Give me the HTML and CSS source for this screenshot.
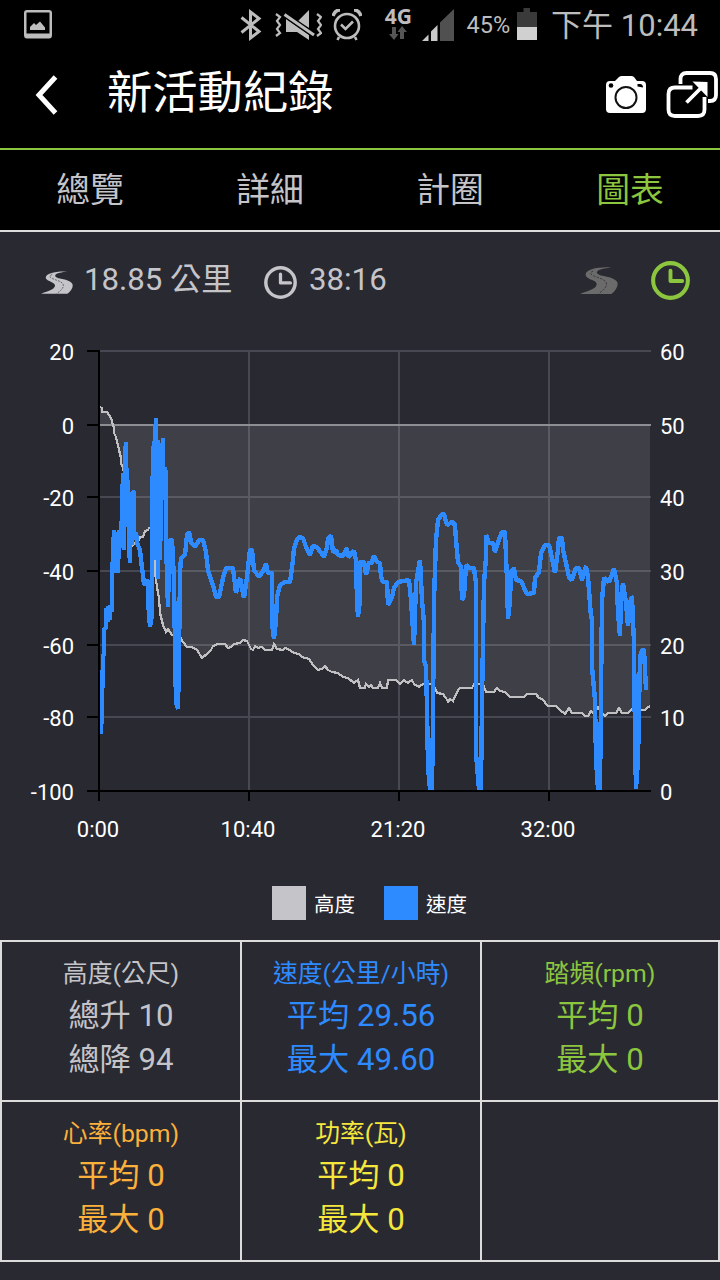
FILE: index.html
```
<!DOCTYPE html>
<html lang="zh-Hant">
<head>
    <meta charset="UTF-8">
    <meta name="viewport" content="width=device-width, initial-scale=1.0">
    <title>新活動紀錄</title>
    <link rel="stylesheet" href="styles.css">
</head>
<body>
    <svg class="defs" width="0" height="0">
        <symbol id="road" viewBox="0 0 115 81">
            <path fill="currentColor" d="M95 1C50-1 18 8 17 22C17 31 28 35 42 41C56 49 50 58 42 64C32 71 14 75 0 81H95C108 71 114 60 114 50C113 38 96 32 72 27C56 24 48 19 52 13C57 6 74 4 95 1Z"/>
            <path class="road-line" d="M40 12C31 15 29 20 38 25C54 33 74 35 80 48C83 60 70 70 56 81"/>
        </symbol>
        <symbol id="clock" viewBox="0 0 40 40">
            <circle cx="20" cy="20" r="17.8" fill="none" stroke="currentColor" stroke-width="4.2"/>
            <path d="M20 10V20.500H32" fill="none" stroke="currentColor" stroke-width="4" stroke-linecap="round" stroke-linejoin="round"/>
        </symbol>
    </svg>

    <div class="status-bar">
        <svg class="icon-picture" width="28" height="29" viewBox="0 0 28 29">
            <path fill="#bdbdbd" fill-rule="evenodd" d="M3 0H25Q28 0 28 3V25Q28 28.500 25 28.500H3Q0 28.500 0 25V3Q0 0 3 0ZM2.500 2.500V23.500H25.500V2.500Z"/>
            <path fill="#bdbdbd" d="M6 20V17L10 13L12 15L16 11.500L21 17.500V20Z"/>
        </svg>
        <div class="status-right">
            <svg width="22" height="32" viewBox="0 0 22 32">
                <path d="M1.500 8.500L19 22.500L10.500 29V3L19 9.500L1.500 23.500" fill="none" stroke="#bdbdbd" stroke-width="3"/>
            </svg>
            <svg class="icon-mute" width="47" height="30" viewBox="0 0 47 30">
                <path d="M1 4L5 7L2 11L5 15L2 19L5 23L1 26M42 4L46 7L43 11L46 15L43 19L46 23L42 26" fill="none" stroke="#bdbdbd" stroke-width="2.200"/>
                <path d="M22.500 11.500L34 0V18ZM11 9L34 25V30L22 22H11Z" fill="#bdbdbd"/>
                <path d="M9 4L39 25" stroke="#000" stroke-width="5.500"/>
                <path d="M9.500 4.500L39 25" stroke="#bdbdbd" stroke-width="3"/>
            </svg>
            <svg class="icon-alarm" width="30" height="32" viewBox="0 0 30 32">
                <circle cx="15" cy="17" r="12" fill="none" stroke="#bdbdbd" stroke-width="2.600"/>
                <path d="M1 7Q3 1 8 1M22 1Q27 1 29 7" fill="none" stroke="#bdbdbd" stroke-width="3.500"/>
                <path d="M9 15.500L13.500 20L21 12.500M7 28L5.500 31M23 28L24.500 31" fill="none" stroke="#bdbdbd" stroke-width="2.600"/>
            </svg>
            <div class="network">
                <span>4G</span>
                <svg width="18" height="14" viewBox="0 0 18 14">
                    <path fill="#555" d="M3 1H7V8H9.500L5 14L0 8H3ZM11 13V6H8.500L13 0L18 6H15V13Z"/>
                </svg>
            </div>
            <svg class="icon-signal" width="32" height="32" viewBox="0 0 32 32">
                <path fill="#505050" d="M18 13.500L32 0V32H18Z"/>
                <path fill="#c8c8c8" d="M0 32L6.500 25.500V32ZM9 22.500L15.500 16V32H9Z"/>
            </svg>
            <span class="percent">45%</span>
            <svg class="icon-battery" width="20" height="32" viewBox="0 0 20 32">
                <path fill="#3a3a3a" d="M6.500 0H13V4H20V32H0V4H6.500Z"/>
                <path fill="#d0d0d0" d="M0 19H20V32H0Z"/>
            </svg>
            <span class="time">下午 10:44</span>
        </div>
    </div>

    <div class="header">
        <svg class="back" width="24" height="42" viewBox="0 0 24 42">
            <path d="M20.500 3L4 21L20.500 39" fill="none" stroke="#fff" stroke-width="5"/>
        </svg>
        <h1>新活動紀錄</h1>
        <svg class="camera" width="40" height="37" viewBox="0 0 40 37">
            <path fill="#fff" d="M4 5H9L13 1Q14 0 16 0H25Q27 0 28 1L31 5H36Q40 5 40 9V33Q40 37 36 37H4Q0 37 0 33V9Q0 5 4 5Z"/>
            <circle cx="20" cy="21.500" r="10.500" fill="#fff" stroke="#111" stroke-width="2"/>
            <circle cx="5" cy="9.500" r="2.300"/>
            <path d="M31.500 8H34Q37 8 37 11.500L31.500 10.500Z"/>
        </svg>
        <svg class="share" width="52" height="47" viewBox="0 0 52 47">
            <path d="M14.500 13V8Q14.500 2 20.500 2H44Q50 2 50 8V24Q50 30 44 30H42M26.500 16.500H9Q2.500 16.500 2.500 23V38.500Q2.500 45 9 45H32Q38.500 45 38.500 38.500V26M20.500 31.500L36 16" fill="none" stroke="#fff" stroke-width="3.800"/>
            <path fill="#fff" d="M26.500 10.500L41.500 11V26Z"/>
        </svg>
    </div>

    <div class="tabs">
        <a>總覽</a>
        <a>詳細</a>
        <a>計圈</a>
        <a class="active">圖表</a>
    </div>

    <div class="summary">
        <svg class="road-small"><use href="#road"/></svg>
        <span class="distance">18.85 公里</span>
        <svg class="clock-small"><use href="#clock"/></svg>
        <span class="duration">38:16</span>
        <svg class="road-toggle"><use href="#road"/></svg>
        <svg class="clock-toggle"><use href="#clock"/></svg>
    </div>

    <svg class="chart" width="720" height="530" viewBox="0 330 720 530">
        <path id="area" class="area"/>
        <path class="grid" d="M99 351H651M99 497H651M99 571H651M99 645H651M99 717H651M249 351V791M399 351V791M549 351V791"/>
        <path class="zero" d="M99 425H651"/>
        <polyline id="altitude" class="altitude" points="100,407 102,408 102,412 107,412 111,418 114,428 114,433 116,437 119,450 121,458 121,464 123,467 126,485 129,515 131,540 133,545 135,543 138,542 140,537 143,537 145,531 148,530 149,528 151,527 153,530 155,547 155,573 157,587 159,598 160,613 163,625 166,632 168,629 172,635 180,637 183,642 187,647 192,647 197,650 202,658 208,653 211,650 213,646 218,644 225,644 228,648 231,647 234,644 240,643 243,640 247,641 251,649 253,650 255,646 258,648 262,647 265,650 272,650 274,644 277,649 283,650 285,648 290,650 294,653 299,654 302,657 309,659 313,665 318,670 322,669 325,666 328,670 332,672 338,673 343,677 348,678 354,683 358,680 360,688 365,688 366,684 369,687 371,685 373,688 378,688 380,683 382,688 387,688 388,680 396,680 400,684 404,680 408,683 412,680 414,684 419,687 423,684 433,684 437,693 443,694 446,698 448,702 450,699 453,701 457,692 460,688 472,688 474,684 483,684 486,692 494,692 497,688 500,691 505,692 510,697 524,697 527,694 536,694 539,698 542,699 548,706 556,706 560,710 565,714 569,708 572,713 582,713 585,716 588,716 591,711 594,714 598,707 602,713 605,716 608,713 616,713 619,708 622,713 628,713 632,709 645,710 647,708 650,706"/>
        <polyline class="speed" points="101,734 102,703 103,657 104,653 104,630 106,627 106,608 108,622 108,606 110,620 110,605 112,612 112,580 114,530 115,573 116,532 118,573 119,530 121,548 123,473 124,550 125,455 126,442 127,523 128,480 129,545 130,563 130,492 132,545 133,492 134,492 134,540 136,532 137,543 140,550 141,560 143,575 144,585 148,580 148,600 150,627 152,615 152,540 153,450 155,440 156,418 156,560 158,440 158,579 160,445 160,560 162,443 162,500 163,438 163,500 165,467 166,477 166,540 168,607 169,560 170,540 172,540 174,580 175,647 176,703 178,709 179,655 180,573 181,558 185,555 187,535 189,532 191,542 195,547 199,540 203,540 206,552 208,570 210,577 213,585 216,597 219,597 222,583 223,578 226,568 233,568 236,593 240,578 244,598 247,577 250,550 252,550 254,570 259,577 263,571 266,564 268,573 272,573 272,623 274,639 276,620 277,597 280,585 285,582 290,582 293,560 294,548 297,540 299,537 303,538 306,547 310,555 313,546 317,547 324,557 327,548 328,538 331,536 333,552 336,550 338,555 343,556 347,548 348,557 354,551 356,560 357,600 358,617 360,600 360,562 364,562 366,575 369,562 371,564 374,556 377,562 380,563 381,577 383,582 387,582 388,605 392,597 394,588 398,582 409,580 411,600 414,645 416,583 420,560 422,600 424,623 424,660 426,667 427,707 428,767 430,789 432,789 433,717 434,600 436,540 438,520 442,514 444,514 447,525 452,522 455,525 456,540 458,562 461,567 462,600 464,596 466,565 469,568 474,568 476,583 476,753 479,789 481,789 482,700 484,583 486,557 486,535 489,543 493,543 495,552 498,542 502,532 505,532 507,580 508,619 510,600 511,572 514,568 516,580 521,581 527,594 534,593 535,578 539,572 541,553 545,545 549,545 552,558 555,573 558,550 559,538 562,538 563,550 566,563 569,577 572,580 576,568 579,568 582,580 586,566 588,577 591,617 592,618 592,667 595,700 596,760 598,789 600,789 602,600 604,578 609,582 614,569 617,583 618,613 620,636 621,597 623,583 626,603 628,626 631,597 632,598 634,643 635,740 636,789 638,760 640,657 642,650 644,650 646,690"/>
        <path class="axis" d="M87 351H99V801M87 425H99M87 497H99M87 571H99M87 645H99M87 717H99M87 791H651M249 791V801M399 791V801M549 791V801"/>
        <g class="labels left">
            <text x="74" y="360">20</text>
            <text x="74" y="434">0</text>
            <text x="74" y="506">-20</text>
            <text x="74" y="580">-40</text>
            <text x="74" y="654">-60</text>
            <text x="74" y="726">-80</text>
            <text x="74" y="800">-100</text>
        </g>
        <g class="labels">
            <text x="660" y="360">60</text>
            <text x="660" y="434">50</text>
            <text x="660" y="506">40</text>
            <text x="660" y="580">30</text>
            <text x="660" y="654">20</text>
            <text x="660" y="726">10</text>
            <text x="660" y="800">0</text>
        </g>
        <g class="labels bottom">
            <text x="98" y="837">0:00</text>
            <text x="248" y="837">10:40</text>
            <text x="398" y="837">21:20</text>
            <text x="548" y="837">32:00</text>
        </g>
    </svg>

    <div class="legend">
        <i class="swatch gray"></i><span>高度</span>
        <i class="swatch blue"></i><span>速度</span>
    </div>

    <div class="stats">
        <div class="cell">
            <h2>高度(公尺)</h2>
            <p>總升 10</p>
            <p>總降 94</p>
        </div>
        <div class="cell speed-cell">
            <h2>速度(公里/小時)</h2>
            <p>平均 29.56</p>
            <p>最大 49.60</p>
        </div>
        <div class="cell cadence">
            <h2>踏頻(rpm)</h2>
            <p>平均 0</p>
            <p>最大 0</p>
        </div>
        <div class="cell heart">
            <h2>心率(bpm)</h2>
            <p>平均 0</p>
            <p>最大 0</p>
        </div>
        <div class="cell power">
            <h2>功率(瓦)</h2>
            <p>平均 0</p>
            <p>最大 0</p>
        </div>
        <div class="cell"></div>
    </div>

    <script>
        // Fill between the altitude line and zero
        const points = document.getElementById('altitude').getAttribute('points');
        document.getElementById('area').setAttribute('d', 'M100,425 L' + points + ' L650,425 Z');
    </script>
</body>
</html>
```
FILE: styles.css
```
* {
    box-sizing: border-box;
}
body {
    margin: 0;
    width: 720px;
    height: 1280px;
    overflow: hidden;
    background-color: #292932;
    color: #c5c4c9;
    font-family: Roboto, "Noto Sans CJK TC", sans-serif;
}
svg {
    display: block;
    flex-shrink: 0;
}
.defs {
    position: absolute;
}
h1, h2, p {
    margin: 0;
    font-weight: 400;
}
.status-bar {
    height: 50px;
    padding: 0 22px 0 24px;
    display: flex;
    justify-content: space-between;
    align-items: center;
    background-color: #000;
    color: #bdbdbd;
}
.icon-picture {
    margin-bottom: 2px;
}
.status-right {
    display: flex;
    align-items: center;
}
.icon-mute {
    margin-left: 13px;
}
.icon-alarm {
    margin-left: 10px;
}
.network {
    width: 28px;
    margin: -3px 0 0 22px;
    display: flex;
    flex-direction: column;
    align-items: center;
    font-family: "Noto Sans", sans-serif;
    font-size: 21px;
    font-weight: 700;
    line-height: 19px;
}
.icon-signal {
    margin-left: 10px;
}
.percent {
    margin-left: 12px;
    font-size: 23.5px;
}
.icon-battery {
    margin-left: 7px;
    margin-bottom: 3px;
}
.time {
    margin: -5px 0 0 14px;
    font-size: 31px;
    white-space: nowrap;
}
.header {
    height: 100px;
    display: flex;
    align-items: center;
    background-color: #000;
    border-bottom: 2px solid #8cc63f;
    color: #fff;
}
.header h1 {
    flex: 1;
    margin: -10px 0 0 48px;
    font-size: 45.3px;
    line-height: 60px;
}
.back {
    margin: -8px 0 0 35px;
}
.camera {
    margin-top: -10px;
}
.share {
    margin: -10px 2px 0 20px;
}
.tabs {
    height: 82px;
    display: grid;
    grid-template-columns: repeat(4, 1fr);
    background-color: #000;
    border-bottom: 2px solid #dcdcdc;
    text-align: center;
    font-size: 33.8px;
    line-height: 81px;
}
.tabs .active {
    color: #8cc63f;
}
.summary {
    height: 98px;
    padding: 0 30px 2px 41px;
    display: flex;
    align-items: center;
    font-size: 31.2px;
}
.road-line {
    fill: none;
    stroke: #292932;
    stroke-width: 2.2;
    stroke-dasharray: 7 4;
}
.road-small {
    width: 32px;
    height: 23px;
    margin: 4px 11px 0 0;
}
.distance {
    width: 148px;
    margin-top: -7px;
    white-space: nowrap;
}
.duration {
    margin-top: -2px;
}
.clock-small {
    width: 33px;
    height: 33px;
    margin: 4px 12px 0 32px;
}
.road-toggle {
    width: 38px;
    height: 27px;
    margin-left: auto;
    color: #6b6b6b;
}
.clock-toggle {
    width: 39px;
    height: 39px;
    margin-left: 33px;
    color: #8cc63f;
}
.area {
    fill: #3f3f48;
}
.grid, .axis, .zero {
    fill: none;
    stroke-width: 2;
}
.grid {
    stroke: rgba(200, 200, 210, 0.2);
}
.zero {
    stroke: #8d8d94;
}
.axis {
    stroke: #000;
}
.altitude {
    fill: none;
    stroke: #c0c0c3;
    stroke-width: 2.2;
    shape-rendering: crispEdges;
}
.speed {
    fill: none;
    stroke: #2e8bff;
    stroke-width: 4.4;
    stroke-linejoin: bevel;
    shape-rendering: crispEdges;
}
.labels {
    fill: #fff;
    font-size: 22px;
}
.left {
    text-anchor: end;
}
.bottom {
    text-anchor: middle;
}
.legend {
    height: 80px;
    padding: 5px 0 0 19px;
    display: flex;
    justify-content: center;
    align-items: center;
    color: #fff;
    font-size: 20.5px;
}
.legend span {
    margin-top: 1px;
}
.swatch {
    width: 34px;
    height: 34px;
    margin-right: 8px;
}
.gray {
    background-color: #c5c4c9;
}
.blue {
    margin-left: 29px;
    background-color: #2e8bff;
}
.stats {
    display: grid;
    grid-template-columns: 240px 240px 238px;
    grid-auto-rows: 160px;
    width: 720px;
    border-top: 2px solid #dcdcdc;
    border-left: 2px solid #dcdcdc;
}
.cell {
    padding-top: 13px;
    border-right: 2px solid #dcdcdc;
    border-bottom: 2px solid #dcdcdc;
    text-align: center;
    font-size: 31.2px;
}
.cell h2 {
    margin-bottom: 1px;
    font-size: 24.8px;
    line-height: 38px;
}
.cell p {
    line-height: 44px;
}
.speed-cell {
    color: #2e8bff;
}
.cadence {
    color: #8cc63f;
}
.heart {
    color: #fbb03b;
}
.power {
    color: #f5e63c;
}
```
